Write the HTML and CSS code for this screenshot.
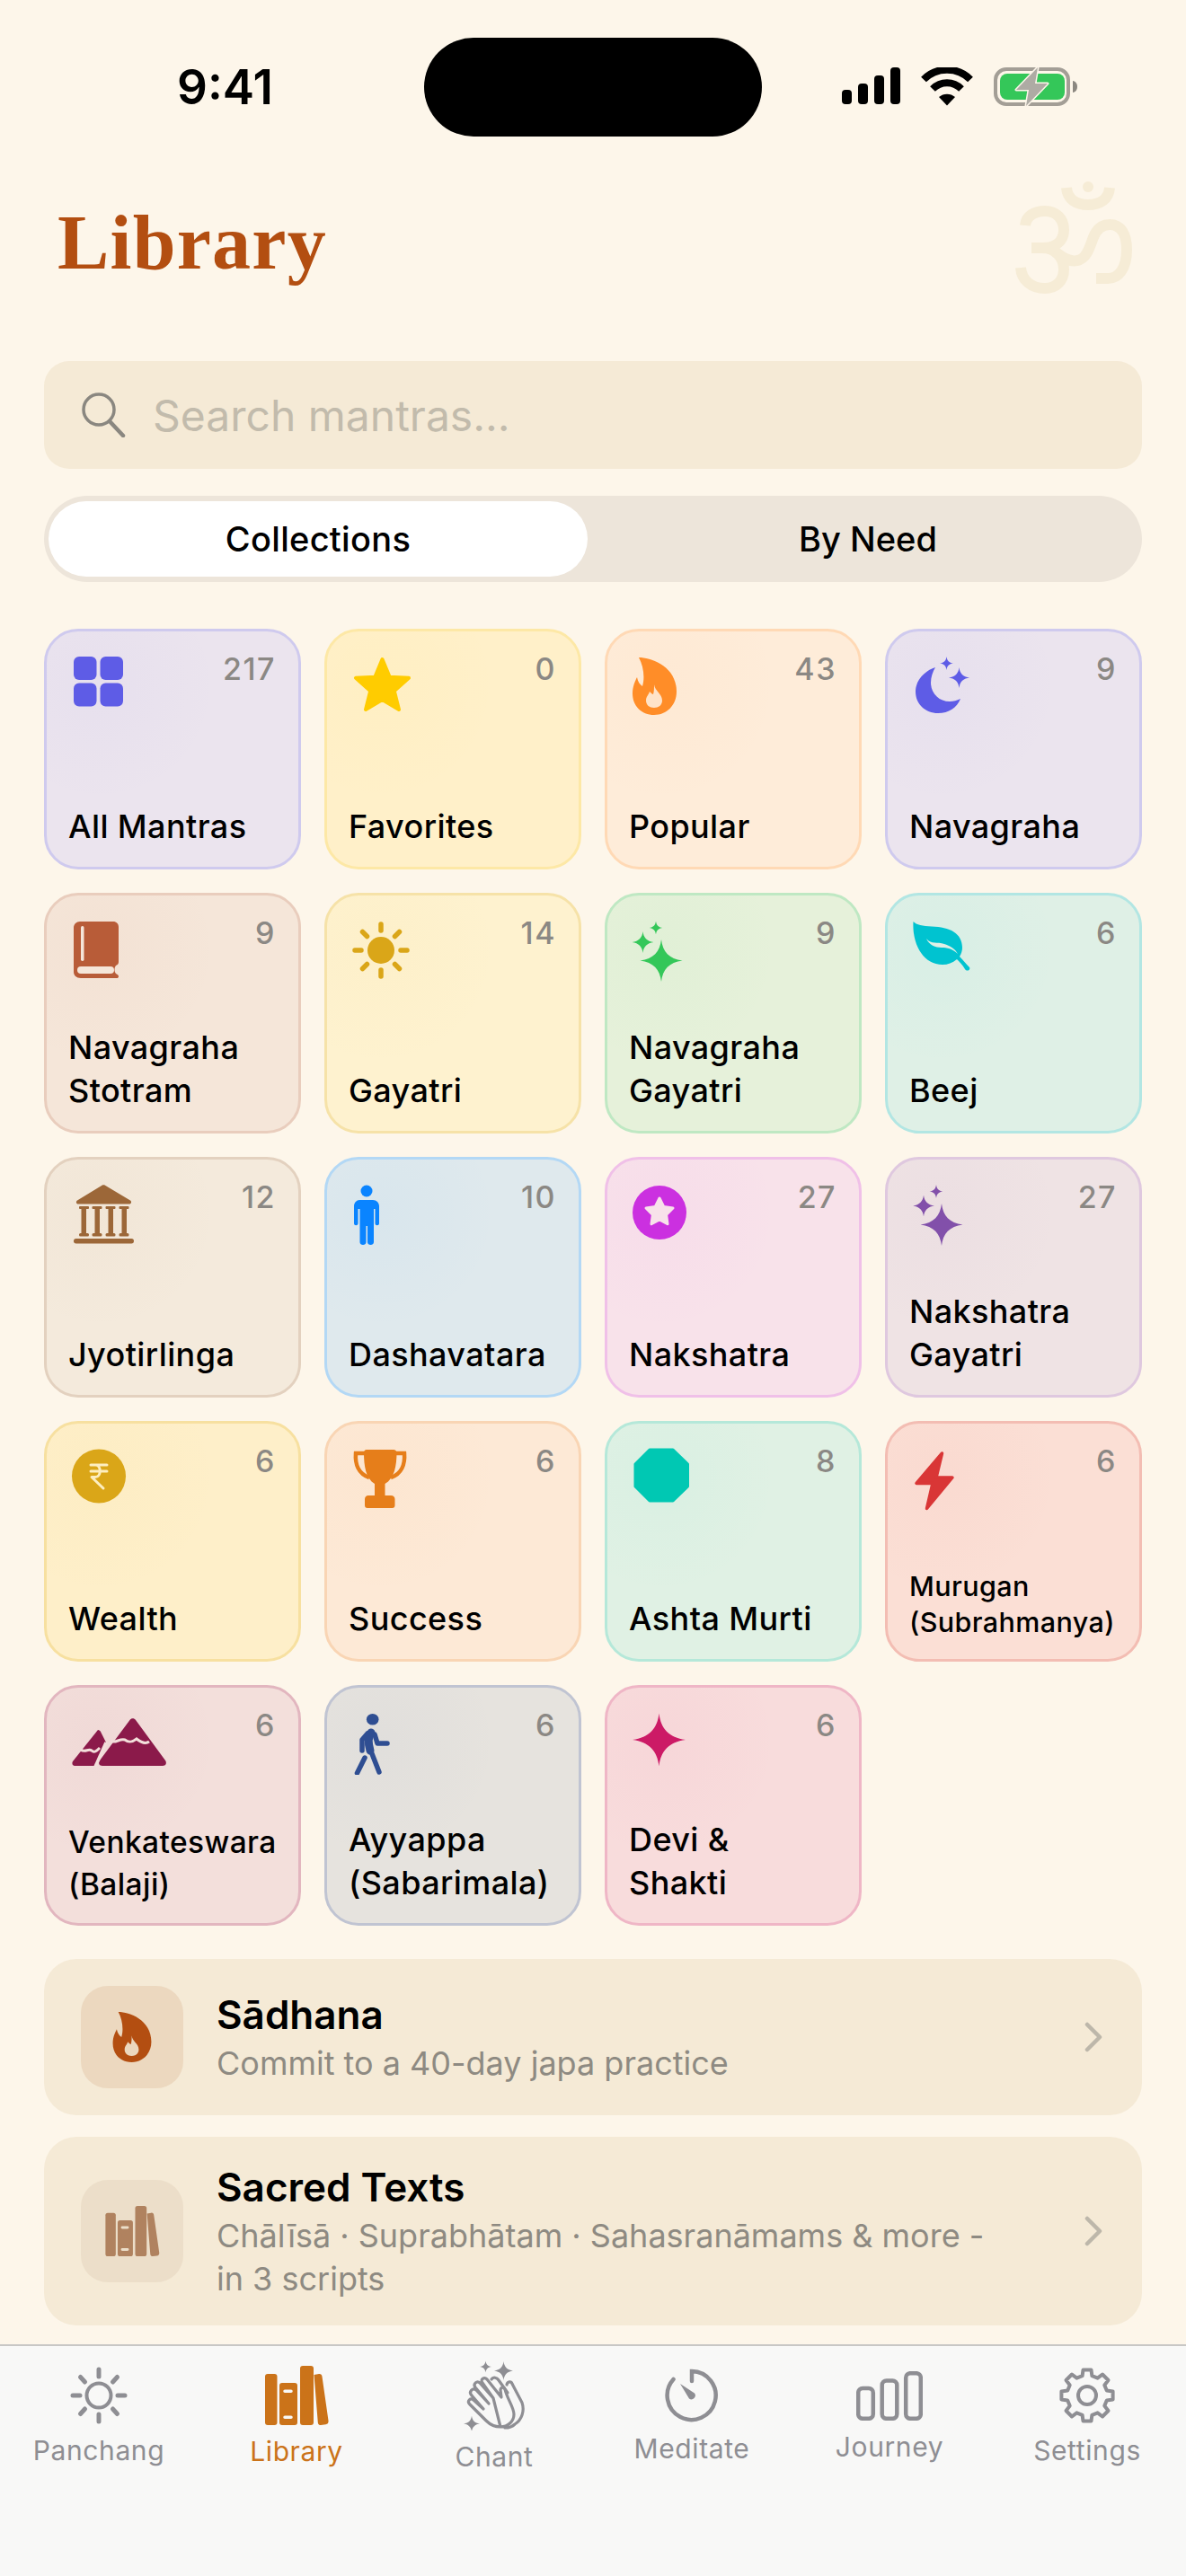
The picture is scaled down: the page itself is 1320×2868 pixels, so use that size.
FILE: index.html
```html
<!DOCTYPE html>
<html lang="en">
<head>
    <meta charset="UTF-8">
    <meta name="viewport" content="width=device-width, initial-scale=1.0">
    <title>Library</title>
    <link rel="stylesheet" href="styles.css">
</head>
<body>

<svg class="sprite" aria-hidden="true">
    <symbol id="sparkle" viewBox="0 0 24 24">
        <path d="M12 0C12.8 7 16.5 11 24 12C16.5 13 12.8 17 12 24C11.2 17 7.5 13 0 12C7.5 11 11.2 7 12 0Z"/>
    </symbol>
    <symbol id="shelf" viewBox="0 0 71 66">
        <rect x="0" y="9" width="13.5" height="57" rx="3"/>
        <path fill-rule="evenodd" d="M19 19H33a3 3 0 0 1 3 3V63a3 3 0 0 1-3 3H19a3 3 0 0 1-3-3V22a3 3 0 0 1 3-3ZM22 26.5a1.7 1.7 0 0 0 0 3.5H29a1.7 1.7 0 0 0 0-3.5ZM22 55.5a1.7 1.7 0 0 0 0 3.5H29a1.7 1.7 0 0 0 0-3.5Z"/>
        <rect x="39" y="0" width="15" height="66" rx="3"/>
        <path d="M54.5 10L60 9C62 8.800 63.300 9.800 63.500 12L70.500 61C70.800 63.500 69.800 65 67.500 65.300L62 66C60 66.200 59 65 58.800 63Z"/>
    </symbol>
</svg>

<div class="phone">

    <div class="status">
        <div class="time">9:41</div>
        <div class="island"></div>
        <div class="status-icons">
            <svg width="65" height="41" viewBox="0 0 65 41" fill="#000">
                <rect x="0" y="25" width="11" height="16" rx="4"/>
                <rect x="18" y="18" width="11" height="23" rx="4"/>
                <rect x="36" y="9" width="11" height="32" rx="4"/>
                <rect x="54" y="0" width="11" height="41" rx="4"/>
            </svg>
            <svg class="wifi" width="58" height="43" viewBox="0 0 58 43">
                <path d="M3 13.500C17 -1 41 -1 55 13.500" fill="none" stroke="#000" stroke-width="8"/>
                <path d="M13 24C22 15 36 15 45 24" fill="none" stroke="#000" stroke-width="8"/>
                <path d="M20 33C25 28.500 33 28.500 38 33L29 42.500Z" fill="#000"/>
            </svg>
            <svg class="battery" width="93" height="43" viewBox="0 0 93 43">
                <rect x="2" y="2" width="81" height="39" rx="12" fill="none" stroke="#a39e96" stroke-width="4"/>
                <rect x="7" y="7" width="72" height="29" rx="8" fill="#34c759"/>
                <path d="M88 15C91 15.500 93 18 93 21.500C93 25 91 27.500 88 28Z" fill="#8b8780"/>
                <path d="M49 0L25 25H39L36 43L60 18H46Z" fill="#aeaba4" stroke="#fdf6ea" stroke-width="3" stroke-linejoin="round" paint-order="stroke"/>
            </svg>
        </div>
    </div>

    <header class="page-head">
        <h1 class="page-title">Library</h1>
        <svg class="om" width="130" height="125" viewBox="0 0 130 125" fill="none" stroke="#f6ecd6" stroke-width="12" aria-hidden="true">
            <circle cx="81" cy="6" r="6" fill="#f6ecd6" stroke="none"/>
            <path d="M57 7C58 20 68 26 81 26C94 26 104 20 105 7"/>
            <path d="M11 49C12 38 22 33 33 33C46 33 54 42 54 54C54 67 44 74 30 74H18M30 74C45 74 54 85 54 98C54 111 45 119 33 119C18 119 7 110 6 96"/>
            <path d="M44 78C52 84 60 90 69 88C80 86 83 72 87 62C91 52 97 48 105 48C117 48 124 58 124 76C124 97 115 108 103 108H90"/>
        </svg>
    </header>

    <main class="content">
        <div class="search">
            <svg width="50" height="50" viewBox="0 0 50 50" fill="none" stroke="#8a8780" stroke-width="3.500" stroke-linecap="round">
                <circle cx="20" cy="19" r="17"/>
                <path d="M32 32L47 48" stroke-width="4.500"/>
            </svg>
            <span class="search-text">Search mantras...</span>
        </div>

        <div class="segment">
            <div class="seg-item seg-active">Collections</div>
            <div class="seg-item">By Need</div>
        </div>

        <div class="grid">
            <div class="tile t-indigo">
                <div class="tile-top">
                    <svg class="ic" width="80" height="72" viewBox="0 0 80 72">
                        <rect x="5" y="3" width="25.500" height="26" rx="6"/>
                        <rect x="34.500" y="3" width="25.500" height="26" rx="6"/>
                        <rect x="5" y="32.500" width="25.500" height="26" rx="6"/>
                        <rect x="34.500" y="32.500" width="25.500" height="26" rx="6"/>
                    </svg>
                    <span class="count">217</span>
                </div>
                <div class="label">All Mantras</div>
            </div>
            <div class="tile t-yellow">
                <div class="tile-top">
                    <svg class="ic" width="80" height="72" viewBox="0 0 80 72">
                        <polygon points="36.500,6 44.700,25.700 66,26.800 49.800,41.300 55,62 36.500,51 18,62 23.200,41.300 7,26.800 28.300,25.700" stroke="currentColor" stroke-width="4" stroke-linejoin="round"/>
                    </svg>
                    <span class="count">0</span>
                </div>
                <div class="label">Favorites</div>
            </div>
            <div class="tile t-orange">
                <div class="tile-top">
                    <svg class="ic" width="80" height="72" viewBox="0 0 80 72">
                        <path d="M10 4C24 4 52 14 52 42C52 57 41 68 27 68C13 68 3 58 3 44C3 36 6 30 8 26C9 31 11 34 14 36C17 26 15 13 10 4Z"/>
                        <path d="M27 34C28 42 36 44 36 52C36 57 32 60 27 60C22 60 18 57 18 52C18 47 21 46 22 42C24 44 25 45 26 45C27 42 27 38 27 34Z" fill="#ffe3c8"/>
                    </svg>
                    <span class="count">43</span>
                </div>
                <div class="label">Popular</div>
            </div>
            <div class="tile t-indigo">
                <div class="tile-top">
                    <svg class="ic" width="80" height="72" viewBox="0 0 80 72">
                        <path d="M28 15C18 18 6 28 6 42C6 56 17 66 31 66C43 66 52 60 56 50C52 52 48 53 44 53C32 53 23 44 23 32C23 26 25 20 28 15Z"/>
                        <use href="#sparkle" x="33" y="3" width="15" height="15"/>
                        <use href="#sparkle" x="43" y="15" width="23" height="23"/>
                    </svg>
                    <span class="count">9</span>
                </div>
                <div class="label">Navagraha</div>
            </div>

            <div class="tile t-rust">
                <div class="tile-top">
                    <svg class="ic" width="80" height="72" viewBox="0 0 80 72">
                        <path d="M12 4H49C52.500 4 55 6.500 55 10V49C55 51 54 52 52 53C50 55 50 60 52 62C54 63 55 64 55 65C55 66.500 54 67 53 67H13C8 67 5 64 5 60V11C5 7 8 4 12 4Z"/>
                        <rect x="9" y="54" width="41" height="8" rx="4" fill="#f5e6d9"/>
                        <rect x="13" y="9" width="3.500" height="39" rx="1.700" fill="#f5e6d9"/>
                    </svg>
                    <span class="count">9</span>
                </div>
                <div class="label">Navagraha Stotram</div>
            </div>
            <div class="tile t-gold">
                <div class="tile-top">
                    <svg class="ic" width="80" height="72" viewBox="0 0 80 72" stroke="currentColor" stroke-width="5.500" stroke-linecap="round">
                        <circle cx="35" cy="36" r="15" stroke="none"/>
                        <path d="M35 7V14M35 58V65M6 36H13M57 36H64M14.500 15.500L19.500 20.500M50.500 51.500L55.500 56.500M14.500 56.500L19.500 51.500M50.500 20.500L55.500 15.500"/>
                    </svg>
                    <span class="count">14</span>
                </div>
                <div class="label">Gayatri</div>
            </div>
            <div class="tile t-green">
                <div class="tile-top">
                    <svg class="ic" width="80" height="72" viewBox="0 0 80 72">
                        <use href="#sparkle" x="11" y="24" width="48" height="47"/>
                        <use href="#sparkle" x="2.500" y="15" width="24" height="24"/>
                        <use href="#sparkle" x="21.500" y="3.500" width="15" height="15"/>
                    </svg>
                    <span class="count">9</span>
                </div>
                <div class="label">Navagraha Gayatri</div>
            </div>
            <div class="tile t-cyan">
                <div class="tile-top">
                    <svg class="ic" width="80" height="72" viewBox="0 0 80 72">
                        <path d="M3.500 4C7 8 14 9 24 9.500C44 10 58 17 58 33C58 36 57 40 55 43C59 47 62 51 66 55C67.500 58 63 60 61 57C58 52 55 49 52 46C47 50 42 52 36 52C15 52 2 30 3.500 4Z"/>
                        <path d="M18 23C24 30 30 26 38 29C44 31 50 34 53 40C47 34 41 33 35 33C28 33 21 30 18 23Z" fill="#dff0e6"/>
                    </svg>
                    <span class="count">6</span>
                </div>
                <div class="label">Beej</div>
            </div>

            <div class="tile t-brown">
                <div class="tile-top">
                    <svg class="ic" width="80" height="72" viewBox="0 0 80 72">
                        <path d="M36.500 3.800C37.500 3.200 39 3.200 40 3.800L68 20.500C70 22 69 24.500 67 24.500H10C8 24.500 7 22 9 20.500Z"/>
                        <rect x="13.500" y="27" width="5.500" height="33"/>
                        <rect x="28.500" y="27" width="5.500" height="33"/>
                        <rect x="43.500" y="27" width="5.500" height="33"/>
                        <rect x="58.500" y="27" width="5.500" height="33"/>
                        <rect x="11" y="27" width="11" height="3" rx="1"/>
                        <rect x="25.500" y="27" width="11" height="3" rx="1"/>
                        <rect x="40.500" y="27" width="11" height="3" rx="1"/>
                        <rect x="55.500" y="27" width="11" height="3" rx="1"/>
                        <rect x="11" y="57" width="11" height="3.500" rx="1.500"/>
                        <rect x="25.500" y="57" width="11" height="3.500" rx="1.500"/>
                        <rect x="40.500" y="57" width="11" height="3.500" rx="1.500"/>
                        <rect x="55.500" y="57" width="11" height="3.500" rx="1.500"/>
                        <rect x="5" y="63" width="67" height="5.500" rx="2.700"/>
                    </svg>
                    <span class="count">12</span>
                </div>
                <div class="label">Jyotirlinga</div>
            </div>
            <div class="tile t-blue">
                <div class="tile-top">
                    <svg class="ic" width="80" height="72" viewBox="0 0 80 72">
                        <circle cx="19" cy="10" r="6.500"/>
                        <path d="M11 20H26C30 20 33 23 33 27V46C33 49 28.500 49 28.500 46V30H27V67C27 71 20 71 20 67V49H18.500V67C18.500 71 11.500 71 11.500 67V30H9.500V46C9.500 49 5 49 5 46V27C5 23 8 20 11 20Z"/>
                    </svg>
                    <span class="count">10</span>
                </div>
                <div class="label">Dashavatara</div>
            </div>
            <div class="tile t-magenta">
                <div class="tile-top">
                    <svg class="ic" width="80" height="72" viewBox="0 0 80 72">
                        <circle cx="33" cy="34" r="30"/>
                        <polygon points="33,18 37.700,27.500 48,29 40.600,36.500 42,46.800 33,42 24,46.800 25.400,36.500 18,29 28.300,27.500" fill="#f8e2ea" stroke="#f8e2ea" stroke-width="3" stroke-linejoin="round"/>
                    </svg>
                    <span class="count">27</span>
                </div>
                <div class="label">Nakshatra</div>
            </div>
            <div class="tile t-purple">
                <div class="tile-top">
                    <svg class="ic" width="80" height="72" viewBox="0 0 80 72">
                        <use href="#sparkle" x="11.500" y="24" width="47" height="47"/>
                        <use href="#sparkle" x="3" y="14.500" width="24" height="24"/>
                        <use href="#sparkle" x="21.500" y="3" width="15" height="15"/>
                    </svg>
                    <span class="count">27</span>
                </div>
                <div class="label">Nakshatra Gayatri</div>
            </div>

            <div class="tile t-gold t-wealth">
                <div class="tile-top">
                    <svg class="ic" width="80" height="72" viewBox="0 0 80 72">
                        <circle cx="33" cy="33.500" r="30"/>
                        <path d="M24 21H42M24 28H42M24 21H29C36 21 36 34.500 29 34.500H25L38 47" fill="none" stroke="#fdeec0" stroke-width="3" stroke-linecap="round" stroke-linejoin="round"/>
                    </svg>
                    <span class="count">6</span>
                </div>
                <div class="label">Wealth</div>
            </div>
            <div class="tile t-amber">
                <div class="tile-top">
                    <svg class="ic" width="80" height="72" viewBox="0 0 80 72">
                        <path d="M19 4H49C51 4 52.500 5.500 52.500 7C52.500 22 50 36 39.500 42V55H46C49 55 50.500 57 50.500 59V66C50.500 68 49.500 69 47.500 69H20C18 69 17 68 17 66V59C17 57 18.500 55 21 55H28V42C18 36 16 22 16 7C16 5.500 17 4 19 4Z"/>
                        <path d="M17 8H7C6 20 10 31 22 35M51 8H61C62 20 58 31 46 35" fill="none" stroke="currentColor" stroke-width="4.500"/>
                    </svg>
                    <span class="count">6</span>
                </div>
                <div class="label">Success</div>
            </div>
            <div class="tile t-teal">
                <div class="tile-top">
                    <svg class="ic" width="80" height="72" viewBox="0 0 80 72">
                        <polygon points="22,4 48,4 64.500,20 64.500,45 48,61 22,61 6,45 6,20" stroke="currentColor" stroke-width="3" stroke-linejoin="round"/>
                    </svg>
                    <span class="count">8</span>
                </div>
                <div class="label">Ashta Murti</div>
            </div>
            <div class="tile t-red">
                <div class="tile-top">
                    <svg class="ic" width="80" height="72" viewBox="0 0 80 72">
                        <path d="M35.500 8L7 41.500H25L18.500 69.500L47 35H29Z" stroke="currentColor" stroke-width="3.500" stroke-linejoin="round"/>
                    </svg>
                    <span class="count">6</span>
                </div>
                <div class="label label-sm">Murugan (Subrahmanya)</div>
            </div>

            <div class="tile t-maroon">
                <div class="tile-top">
                    <svg class="ic" width="112" height="72" viewBox="0 0 112 72">
                        <path d="M32 22C33.500 22 34.500 23 35 24L41 36L30 62H7C4 62 2.500 60 4 57Z"/>
                        <path d="M67.500 11C69 8.500 72.500 8.500 74 11L107 56C109 59 107.500 62 104 62H37C33.500 62 32 59 34 56Z"/>
                        <path d="M13 44C18 48 21 42 25 45C28 48 31 45 34 42M46 34C51 38 56 31 62 33C67 37 71 35 75 32C80 36 85 38 89 35" fill="none" stroke="#f3dfdb" stroke-width="3"/>
                        <path d="M41 36L29 63" fill="none" stroke="#f3dfdb" stroke-width="3.500"/>
                    </svg>
                    <span class="count">6</span>
                </div>
                <div class="label label-md">Venkateswara (Balaji)</div>
            </div>
            <div class="tile t-navy">
                <div class="tile-top">
                    <svg class="ic" width="80" height="72" viewBox="0 0 80 72">
                        <ellipse cx="25.700" cy="10.300" rx="6.800" ry="6.300"/>
                        <path d="M24 25C20 30 21 38 23 45" fill="none" stroke="currentColor" stroke-width="9" stroke-linecap="round"/>
                        <path d="M20 26L14 33V45M28 27L31 37H42M24 46L33 69M17 53L8.500 70" fill="none" stroke="currentColor" stroke-width="5.500" stroke-linecap="round" stroke-linejoin="round"/>
                    </svg>
                    <span class="count">6</span>
                </div>
                <div class="label">Ayyappa (Sabarimala)</div>
            </div>
            <div class="tile t-pink">
                <div class="tile-top">
                    <svg class="ic" width="80" height="72" viewBox="0 0 80 72">
                        <use href="#sparkle" x="3" y="3.500" width="59" height="59"/>
                    </svg>
                    <span class="count">6</span>
                </div>
                <div class="label">Devi &amp;<br>Shakti</div>
            </div>
        </div>

        <div class="link-row">
            <div class="link-icon link-icon-fire">
                <svg width="44" height="56" viewBox="3 4 49 64" fill="#b34e11">
                    <path d="M10 4C24 4 52 14 52 42C52 57 41 68 27 68C13 68 3 58 3 44C3 36 6 30 8 26C9 31 11 34 14 36C17 26 15 13 10 4Z"/>
                    <path d="M27 34C28 42 36 44 36 52C36 57 32 60 27 60C22 60 18 57 18 52C18 47 21 46 22 42C24 44 25 45 26 45C27 42 27 38 27 34Z" fill="#ecd8bf"/>
                </svg>
            </div>
            <div class="link-text">
                <div class="link-title">Sādhana</div>
                <div class="link-sub">Commit to a 40-day japa practice</div>
            </div>
            <svg class="chevron" width="20" height="34" viewBox="0 0 20 34" fill="none" stroke="#bdb7aa" stroke-width="4.500" stroke-linecap="round" stroke-linejoin="round"><path d="M3 3L17 17L3 31"/></svg>
        </div>

        <div class="link-row link-row-tall">
            <div class="link-icon link-icon-books">
                <svg width="65" height="56" fill="#b0825f"><use href="#shelf" width="65" height="56"/></svg>
            </div>
            <div class="link-text">
                <div class="link-title">Sacred Texts</div>
                <div class="link-sub">Chālīsā · Suprabhātam · Sahasranāmams &amp; more - in 3 scripts</div>
            </div>
            <svg class="chevron" width="20" height="34" viewBox="0 0 20 34" fill="none" stroke="#bdb7aa" stroke-width="4.500" stroke-linecap="round" stroke-linejoin="round"><path d="M3 3L17 17L3 31"/></svg>
        </div>
    </main>

    <nav class="tabbar">
        <div class="tab tab-sun">
            <svg width="64" height="64" viewBox="0 0 64 64" fill="none" stroke="currentColor" stroke-linecap="round">
                <circle cx="32" cy="32" r="13.500" stroke-width="4"/>
                <path d="M32 3V11M32 53V61M3 32H11M53 32H61M11.500 11.500L16.500 17M47.500 47L52.500 52.500M11.500 52.500L16.500 47M47.500 17L52.500 11.500" stroke-width="5"/>
            </svg>
            <span>Panchang</span>
        </div>
        <div class="tab tab-lib tab-active">
            <svg width="71" height="66" fill="currentColor"><use href="#shelf" width="71" height="66"/></svg>
            <span>Library</span>
        </div>
        <div class="tab tab-chant">
            <svg width="69" height="78" viewBox="0 0 69 78" fill="none" stroke="currentColor" stroke-width="3.200" stroke-linecap="round" stroke-linejoin="round">
                <use href="#sparkle" x="18" y="0.500" width="13" height="13" fill="currentColor" stroke="none"/>
                <use href="#sparkle" x="34" y="1" width="21" height="21" fill="currentColor" stroke="none"/>
                <use href="#sparkle" x="0" y="61.500" width="18" height="18" fill="currentColor" stroke="none"/>
                <path d="M41 74C34 74 29 71 25 67L7 49C3 45 8 41 11 44L22 54M22 54L9 39C5 35 10 30 14 33L28 48M28 48L13 30C10 26 15 22 18 25L33 42M33 42L21 25C18 21 23 18 26 21L42 41L41 33C41 30 45 29 46 32C48 42 56 52 56 60C56 68 49 74 41 74Z"/>
                <path d="M31 21C33 18 37 19 39 22L49 36M48 27C49 23 53 23 54 26L65 47C68 56 65 66 57 71C54 74 50 75 46 75"/>
            </svg>
            <span>Chant</span>
        </div>
        <div class="tab tab-med">
            <svg width="60" height="60" viewBox="0 0 60 60" fill="none" stroke="currentColor" stroke-width="4.500" stroke-linecap="round">
                <path d="M30 14V3A27 27 0 1 1 9.500 12"/>
                <path d="M17 17L33 27.500A4.300 4.300 0 0 1 27 33.500Z" fill="currentColor" stroke="none"/>
            </svg>
            <span>Meditate</span>
        </div>
        <div class="tab tab-jour">
            <svg width="74" height="55" viewBox="0 0 74 55" fill="none" stroke="currentColor" stroke-width="4.500">
                <rect x="2.200" y="19" width="16.600" height="33.800" rx="5"/>
                <rect x="28.700" y="10.500" width="16.600" height="42.300" rx="5"/>
                <rect x="55.200" y="2.200" width="16.600" height="50.600" rx="5"/>
            </svg>
            <span>Journey</span>
        </div>
        <div class="tab tab-set">
            <svg width="64" height="64" viewBox="0 0 64 64" fill="none" stroke="currentColor" stroke-width="4" stroke-linejoin="round">
                <path d="M27.500 3.400H36.500L37.400 10.200L43.600 12.700L49 8.500L55.500 15L51.300 20.400L53.800 26.600L60.600 27.500V36.500L53.800 37.400L51.300 43.600L55.500 49L49 55.500L43.600 51.300L37.400 53.800L36.500 60.600H27.500L26.600 53.800L20.400 51.300L15 55.500L8.500 49L12.700 43.600L10.200 37.400L3.400 36.500V27.500L10.200 26.600L12.700 20.400L8.500 15L15 8.500L20.400 12.700L26.600 10.200Z"/>
                <circle cx="32" cy="32" r="10"/>
            </svg>
            <span>Settings</span>
        </div>
    </nav>

</div>

</body>
</html>
```

FILE: styles.css
```css
* { box-sizing: border-box; }
body { margin: 0; font-family: Inter, "Noto Sans", sans-serif; color: #000; }
svg { display: block; flex: none; }
.sprite { position: absolute; width: 0; height: 0; }

.phone { width: 1320px; height: 2868px; background: #fdf6ea; display: flex; flex-direction: column; overflow: hidden; }

/* status bar */
.status { height: 152px; padding: 42px 0 0 197px; display: flex; }
.time { width: 275px; font-size: 53px; font-weight: 600; line-height: 63px; margin-top: 24px; }
.island { width: 376px; height: 110px; background: #000; border-radius: 55px; }
.status-icons { display: flex; align-items: flex-start; padding-top: 33px; margin-left: 89px; gap: 23px; }

/* header */
.page-head { height: 250px; padding: 50px 60px 0 64px; display: flex; justify-content: space-between; align-items: flex-start; }
.page-title { margin: 18px 0 0; font-family: "Liberation Serif", serif; font-size: 86px; font-weight: 700; line-height: 100px; color: #b34e11; letter-spacing: 1.200px; }

.content { padding: 0 49px; }

.search { height: 120px; background: #f5ead6; border-radius: 28px; display: flex; align-items: center; padding-left: 41px; gap: 30px; }
.search-text { font-size: 48px; color: #c2bbac; }

.segment { margin-top: 30px; height: 96px; background: #ede5da; border-radius: 48px; padding: 6px 5px; display: flex; }
.seg-item { width: 600px; border-radius: 42px; display: flex; align-items: center; justify-content: center; font-size: 38px; font-weight: 500; padding-left: 24px; }
.seg-active { background: #fff; padding-left: 0; letter-spacing: .3px; }

/* tiles */
.grid { margin-top: 52px; display: grid; grid-template-columns: repeat(4, minmax(0, 1fr)); grid-auto-rows: 268px; gap: 26px; }
.tile { min-width: 0; border: 3px solid var(--bd); border-radius: 38px; padding: 25px 25px 21px; display: flex; flex-direction: column; justify-content: space-between; background: radial-gradient(circle at 60px 60px, color-mix(in srgb, currentColor 3%, transparent), transparent 130px), var(--bg); }
.tile-top { display: flex; justify-content: space-between; align-items: flex-start; }
.ic { fill: currentColor; }
.count { font-size: 34px; font-weight: 500; line-height: 40px; margin-top: -3px; color: #8b8884; letter-spacing: 1.500px; }
.label { font-size: 36px; font-weight: 500; line-height: 48px; color: #000; letter-spacing: .4px; margin-left: -1px; }
.label-sm { font-size: 30.500px; line-height: 40px; margin-right: -10px; }
.label-md { font-size: 33.500px; line-height: 47px; margin-right: -10px; margin-bottom: -2px; }

.t-indigo { color: #5e5ce6; --bg: #ebe4ee; --bd: #cfcaee; }
.t-yellow { color: #ffcc00; --bg: #fff0c9; --bd: #fde8a6; }
.t-orange { color: #ff8d28; --bg: #feecd9; --bd: #ffd9b5; }
.t-rust { color: #b85c38; --bg: #f5e6d9; --bd: #e9cdbd; }
.t-gold { color: #daa618; --bg: #fef2cf; --bd: #f6e2a8; }
.t-green { color: #34c759; --bg: #e6f1da; --bd: #bfe8c3; }
.t-cyan { color: #00c3d0; --bg: #dff0e6; --bd: #b2e6e3; }
.t-brown { color: #9c6738; --bg: #f4eadc; --bd: #e3d1bf; }
.t-blue { color: #0a84ff; --bg: #dfe9ed; --bd: #b3d8f5; }
.t-magenta { color: #cb30e0; --bg: #f8e2ea; --bd: #f0c0e8; }
.t-purple { color: #8250aa; --bg: #efe3e4; --bd: #dfc8df; }
.t-wealth { --bg: #feefc9; --bd: #f7e0a0; }
.t-amber { color: #e67e1a; --bg: #fde9d6; --bd: #f9d5b4; }
.t-teal { color: #00c8b3; --bg: #e0f1e4; --bd: #b5e8d9; }
.t-red { color: #d93636; --bg: #fbdfd5; --bd: #f3bdb3; }
.t-maroon { color: #8b1a4a; --bg: #f3dfdb; --bd: #e2b6bf; }
.t-navy { color: #2f4e92; --bg: #e6e3de; --bd: #c0c4d2; }
.t-pink { color: #cc1a66; --bg: #f8dcdc; --bd: #efb6c6; }

/* link rows */
.link-row { margin-top: 24px; height: 174px; background: #f5ead6; border-radius: 36px; padding: 0 44px 0 41px; display: flex; align-items: center; }
.grid + .link-row { margin-top: 37px; }
.link-row-tall { height: 210px; }
.link-icon { width: 114px; height: 114px; border-radius: 30px; display: flex; align-items: center; justify-content: center; flex: none; }
.link-icon-fire { background: #ecd8bf; }
.link-icon-books { background: #ecdec9; }
.link-text { flex: 1; margin-left: 37px; }
.link-title { font-size: 44px; font-weight: 600; line-height: 56px; }
.link-sub { font-size: 36px; line-height: 48px; margin-top: 2px; color: #8e8a82; max-width: 860px; }

/* tab bar */
.tabbar { margin-top: auto; height: 258px; background: #f8f8f7; border-top: 2px solid #c8c7c5; display: flex; }
.tab { width: 220px; display: flex; flex-direction: column; align-items: center; color: #8e8e93; font-size: 30px; line-height: 40px; letter-spacing: .6px; }
.tab span { margin-top: 9px; }
.tab-active { color: #cb7319; }
.tab-sun svg, .tab-set svg { margin-top: 23px; }
.tab-lib svg { margin-top: 22px; }
.tab-chant svg { margin-top: 16px; }
.tab-med svg { margin-top: 25px; }
.tab-jour svg { margin-top: 28px; }
```
